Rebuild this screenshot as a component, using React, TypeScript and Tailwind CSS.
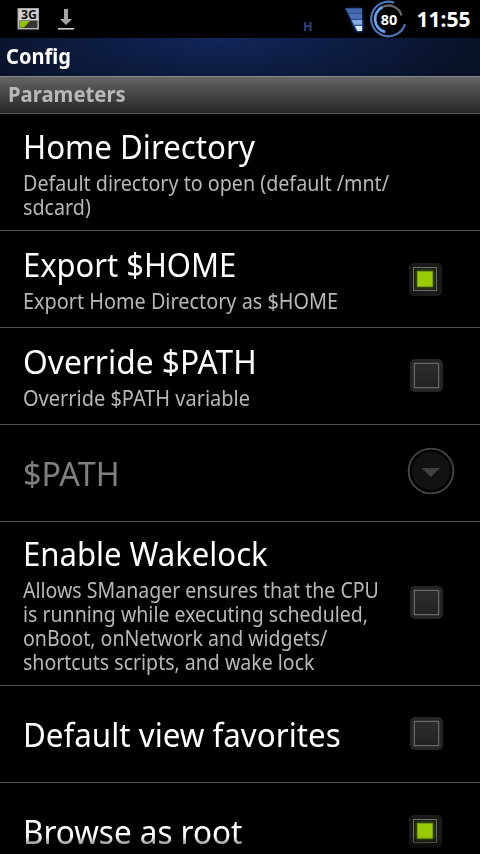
import React from "react";
import clsx from "clsx";

type Pref = {
  title: string;
  titleScale: string;
  summary?: string;
  summaryScale?: string;
  height: string;
  control?: "on" | "off" | "dropdown";
  disabled?: boolean;
};

const prefs: Pref[] = [
  {
    title: "Home Directory",
    titleScale: "scale-x-[0.947]",
    summary: "Default directory to open (default /mnt/\nsdcard)",
    summaryScale: "scale-x-[0.938]",
    height: "h-[117px] pt-0.5",
  },
  {
    title: "Export $HOME",
    titleScale: "scale-x-[0.937]",
    summary: "Export Home Directory as $HOME",
    summaryScale: "scale-x-[0.945]",
    height: "h-[97px]",
    control: "on",
  },
  {
    title: "Override $PATH",
    titleScale: "scale-x-[0.961]",
    summary: "Override $PATH variable",
    summaryScale: "scale-x-[0.951]",
    height: "h-[97px]",
    control: "off",
  },
  {
    title: "$PATH",
    titleScale: "scale-x-[0.978]",
    height: "h-[97px]",
    control: "dropdown",
    disabled: true,
  },
  {
    title: "Enable Wakelock",
    titleScale: "scale-x-[0.941]",
    summary:
      "Allows SManager ensures that the CPU\nis running while executing scheduled,\nonBoot, onNetwork and widgets/\nshortcuts scripts, and wake lock",
    summaryScale: "scale-x-[0.93]",
    height: "h-[164px]",
    control: "off",
  },
  {
    title: "Default view favorites",
    titleScale: "scale-x-[0.949]",
    height: "h-[97px]",
    control: "off",
  },
  {
    title: "Browse as root",
    titleScale: "scale-x-[0.952]",
    height: "h-[97px]",
    control: "on",
  },
];

const Checkbox = ({ checked }: { checked: boolean }) =>
  checked ? (
    <div className="mr-[38.5px] flex size-[33px] items-center justify-center rounded-[5px] bg-[#1a1a1a]">
      <div className="mr-px flex size-6 items-center justify-center border border-[#6e6e6e] bg-[#1c1e16]">
        <div className="size-4 border border-[#77a000] bg-[#99cc00] shadow-[0_0_4px_#577500]" />
      </div>
    </div>
  ) : (
    <div className="mr-[37px] mb-0.5 flex size-[33px] items-center justify-center rounded-[5px] bg-[#252525]">
      <div className="size-[25px] border-[1.5px] border-[#686868] bg-linear-to-b from-[#2d2d2d] to-[#222] shadow-[0_0_0_0.5px_#444]" />
    </div>
  );

const Dropdown = () => (
  <svg className="mr-[25px] mb-1" width="48" height="48" viewBox="0 0 48 48">
    <circle cx="24" cy="24" r="22.4" fill="#030303" stroke="#464646" strokeWidth="1.8" />
    <circle cx="24" cy="24" r="19" fill="#121212" />
    <path d="M14.5 21h18.5l-9.2 9z" fill="#404040" />
  </svg>
);

const StatusBar = () => (
  <div className="flex h-[38px] shrink-0 items-center justify-between bg-black">
    <svg width="90" height="38" viewBox="0 0 90 38">
      <rect x="18" y="8.5" width="20.5" height="20.5" fill="#cfcfcf" stroke="#a5a5a5" />
      <rect x="19.5" y="20.5" width="18" height="7.5" fill="#353535" />
      <path d="M20 21h10l-6 6.5h-4z" fill="#8cc400" />
      <text
        x="21"
        y="18.5"
        fontFamily="Noto Sans"
        fontWeight="700"
        fontSize="12.5"
        fill="#111"
        textLength="16"
        lengthAdjust="spacingAndGlyphs"
      >
        3G
      </text>
      <path d="M64 9h4v10h4l-6 6-6-6h4z" fill="#a5a5a5" />
      <path d="M58 28.8h16" stroke="#ddd" strokeWidth="1.5" />
    </svg>
    <svg width="190" height="38" viewBox="290 0 190 38">
      <defs>
        <filter id="glow" x="-50%" y="-50%" width="200%" height="200%">
          <feGaussianBlur stdDeviation="1.8" />
        </filter>
      </defs>
      <text
        x="303"
        y="31"
        fontFamily="Noto Sans"
        fontWeight="700"
        fontSize="12"
        fill="#2b4680"
        textLength="9.5"
        lengthAdjust="spacingAndGlyphs"
      >
        H
      </text>
      {/* signal strength wedge */}
      <path d="M345.5 8.5h16.5v22.5h-5z" fill="#1d4290" filter="url(#glow)" />
      <path d="M351.5 20h10.5v11h-5z" fill="#3c86ff" filter="url(#glow)" />
      <path d="M345.5 8.5h16.5v22.5h-5z" fill="#2f5296" />
      <path d="M345.5 8.5h16.5v4.5h-14z" fill="#4268ab" />
      <path d="M348.5 14h13.5v4.7h-11z" fill="#4b72b8" />
      <path d="M351.5 20h10.5v4.7h-8z" fill="#86a9df" />
      <path d="M355 26h7v5h-4.5z" fill="#d9eeff" />
      {/* battery ring */}
      <path d="M394.1 2.6A17.3 17.3 0 1 0 405 24.1" fill="none" stroke="#4a74b8" strokeWidth="2.2" />
      <path d="M382.5 7A13.4 13.4 0 0 1 401.5 15.5" fill="none" stroke="#666" strokeWidth="2.4" />
      <path d="M382.5 7A13.4 13.4 0 0 0 385.2 32" fill="none" stroke="#66a6f8" strokeWidth="2.8" />
      <text
        x="389"
        y="25"
        textAnchor="middle"
        fontFamily="Noto Sans"
        fontWeight="700"
        fontSize="14"
        fill="#fff"
        textLength="16.5"
        lengthAdjust="spacingAndGlyphs"
      >
        80
      </text>
      <text
        x="416.5"
        y="27"
        fontFamily="Noto Sans"
        fontWeight="700"
        fontSize="21.5"
        fill="#fff"
        textLength="54"
        lengthAdjust="spacingAndGlyphs"
      >
        11:55
      </text>
    </svg>
  </div>
);

const Row = ({ pref }: { pref: Pref }) => (
  <li
    className={clsx(
      "flex items-center justify-between border-b border-[#515151] pl-[23px]",
      pref.height
    )}
  >
    <div className="w-0">
      <p
        className={clsx(
          "w-max origin-left text-[33px] leading-[39px]",
          pref.titleScale,
          pref.disabled ? "text-[#808080]" : "text-white"
        )}
      >
        {pref.title}
      </p>
      {pref.summary && (
        <p
          className={clsx(
            "mt-[5px] w-max origin-left text-[21px] leading-6 whitespace-pre text-[#b8b8b8]",
            pref.summaryScale
          )}
        >
          {pref.summary}
        </p>
      )}
    </div>
    {pref.control === "dropdown" && <Dropdown />}
    {(pref.control === "on" || pref.control === "off") && (
      <Checkbox checked={pref.control === "on"} />
    )}
  </li>
);

const App = () => {
  return (
    <div className="relative flex h-[854px] w-[480px] flex-col overflow-hidden bg-black font-['Noto_Sans',sans-serif]">
      <StatusBar />
      <div className="flex h-[38px] shrink-0 items-center bg-[radial-gradient(ellipse_270px_70px_at_46%_0%,#11265a,#081126)] pb-0.5 pl-1.5">
        <h1 className="origin-left scale-x-[0.955] text-[21px] leading-6 font-bold text-white">
          Config
        </h1>
      </div>
      <div className="flex h-[38px] shrink-0 items-center border-t border-b border-t-[#888] border-b-[#555] bg-linear-to-b from-[#666] to-[#262626] pb-0.5 pl-2">
        <h2 className="origin-left scale-x-[0.967] text-[21px] leading-6 font-bold text-[#b8b8b8]">
          Parameters
        </h2>
      </div>
      <ul>
        {prefs.map((pref) => (
          <Row key={pref.title} pref={pref} />
        ))}
      </ul>
      {/* fading edge of the list */}
      <div className="pointer-events-none absolute inset-x-0 bottom-0 h-[18px] bg-linear-to-b from-transparent to-black/90" />
    </div>
  );
};

export default App;
